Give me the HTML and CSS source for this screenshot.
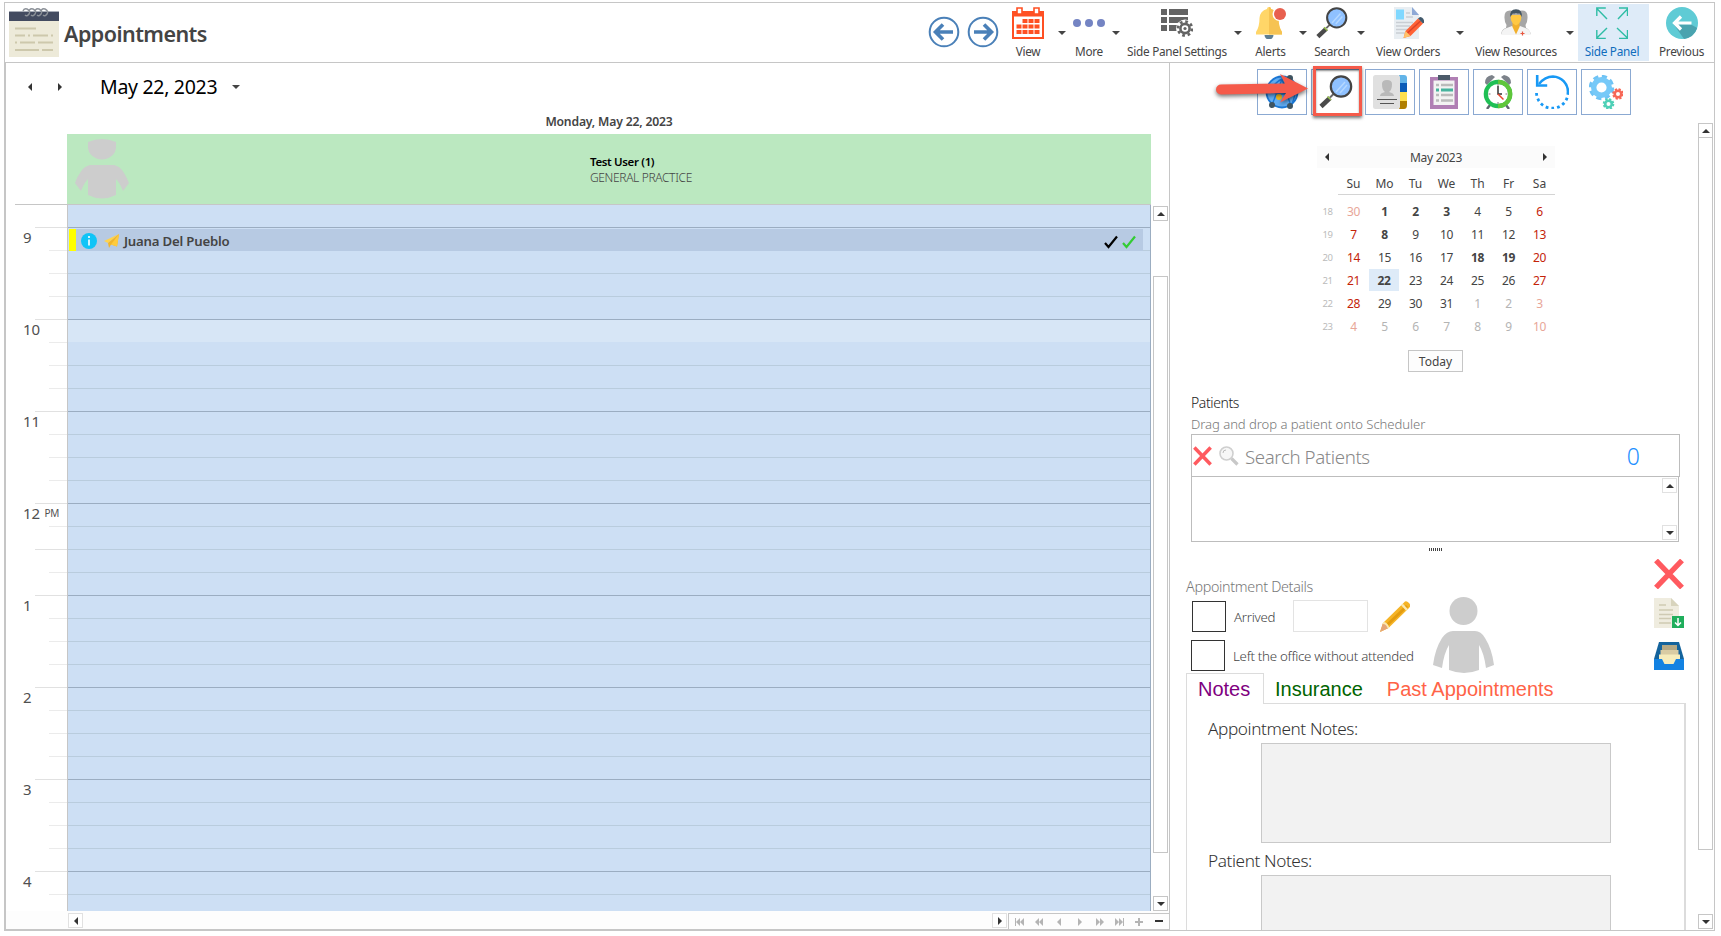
FILE: index.html
```html
<!DOCTYPE html>
<html lang="en">
<head>
  <meta charset="UTF-8"/>
  <meta name="viewport" content="width=device-width, initial-scale=1"/>
  <title>Appointments</title>
  <link rel="stylesheet" href="styles.css">
</head>
<body>
  <!-- shared icons -->
  <svg class="defs" width="0" height="0">
    <symbol id="magnifier" viewBox="0 0 34 34">
      <path d="M2 31.500L11 23" stroke="#4a4a4a" stroke-width="4.600"/>
      <path d="M11 22.500l4.500-4.500" stroke="#666" stroke-width="2"/>
      <path d="M8.500 21.500l3.500 3.500" stroke="#9bc94b" stroke-width="1.300"/>
      <circle cx="22" cy="11.500" r="10.200" fill="#8fc1ff" stroke="#444" stroke-width="2.200"/>
      <path d="M17 17l9-10M21 18l7-8" stroke="#b5d8ff" stroke-width="1.500"/>
    </symbol>
    <symbol id="cross" viewBox="0 0 28 29">
      <path d="M2 2L26 27M26 2L2 27" stroke="#ff5a5f" stroke-width="5.200"/>
    </symbol>
    <symbol id="person" viewBox="0 0 61 76">
      <circle cx="30.500" cy="14" r="14" fill="#cdcdcd"/>
      <path d="M20 34h22q6 0 10 7 7 11 9 27l-8 3q-2-15-7-23v25q-15 6-30 0V48q-5 8-7 23l-9-3q2-16 9-27 5-7 11-7z" fill="#cdcdcd"/>
    </symbol>
  </svg>

  <div class="window">
    <header class="topbar">
      <svg class="logo" viewBox="0 0 50 49">
        <path d="M0 12h50v37H0z" fill="#edead9"/>
        <path d="M0 4h50v9H0z" fill="#434b60"/>
        <path d="M0 3.500h50" stroke="#a9aeb8"/>
        <g fill="none" stroke="#8d9299" stroke-width="1.400">
          <path d="M14 3q1-3 4-2 4 2 2 5-2 3-4 1"/>
          <path d="M20 3q1-3 4-2 4 2 2 5-2 3-4 1"/>
          <path d="M26 3q1-3 4-2 4 2 2 5-2 3-4 1"/>
          <path d="M32 3q1-3 4-2 4 2 2 5-2 3-4 1"/>
        </g>
        <g stroke="#cdc8ac" stroke-width="1.800">
          <path d="M6 20.500h21M6 27.500h10M19 27.500h2M24 27.500h15M42 27.500h2M6 34.500h2M11 34.500h15M29 34.500h15M6 42h24M33 42h11"/>
        </g>
      </svg>
      <h1>Appointments</h1>

      <nav class="toolbar">
        <svg class="round" viewBox="0 0 32 32">
          <circle cx="16" cy="16" r="14.300" fill="#fff" stroke="#4a80b8" stroke-width="2"/>
          <path d="M25 16H8M15 8.500L7.500 16l7.500 7.500" fill="none" stroke="#4a80b8" stroke-width="3.600"/>
        </svg>
        <svg class="round" viewBox="0 0 32 32">
          <circle cx="16" cy="16" r="14.300" fill="#fff" stroke="#4a80b8" stroke-width="2"/>
          <path d="M7 16h17M17 8.500l7.500 7.500-7.500 7.500" fill="none" stroke="#4a80b8" stroke-width="3.600"/>
        </svg>

        <div class="tool view">
          <svg viewBox="0 0 32 32">
            <path d="M0 4h32v28H0z" fill="#ff5023"/>
            <path d="M2 9.500h28v20.500H2z" fill="#fff"/>
            <path d="M5 1h5v6H5zM22 1h5v6h-5z" fill="#fff" stroke="#ff5023" stroke-width="1.600"/>
            <path d="M10.500 12h5v4h-5zM16.500 12h5v4h-5zM22.500 12h5v4h-5zM4.500 17.500h5v4h-5zM10.500 17.500h5v4h-5zM16.500 17.500h5v4h-5zM22.500 17.500h5v4h-5zM4.500 23h5v4h-5zM10.500 23h5v4h-5zM16.500 23h5v4h-5zM22.500 23h5v4h-5z" fill="#ff5023"/>
          </svg>
          <span>View</span>
        </div>
        <i class="caret"></i>
        <div class="tool more">
          <svg viewBox="0 0 32 32">
            <g fill="#7484c3"><circle cx="4" cy="16" r="4"/><circle cx="16" cy="16" r="4"/><circle cx="28" cy="16" r="4"/></g>
          </svg>
          <span>More</span>
        </div>
        <i class="caret"></i>
        <div class="tool settings">
          <svg viewBox="0 0 32 32">
            <path d="M0 2h6v6H0zM8 2h19v6H8zM0 10h6v6H0zM8 10h19v6H8zM0 18h6v6H0zM8 18h10v6H8z" fill="#646464"/>
            <circle cx="24" cy="21.500" r="9" fill="#fff"/>
            <circle cx="24" cy="21.500" r="7" fill="none" stroke="#646464" stroke-width="2.600" stroke-dasharray="2.750 2.750"/>
            <circle cx="24" cy="21.500" r="4.600" fill="#fff" stroke="#646464" stroke-width="2.600"/>
            <circle cx="24" cy="21.500" r="1.600" fill="#646464"/>
          </svg>
          <span>Side Panel Settings</span>
        </div>
        <i class="caret"></i>
        <div class="tool alerts">
          <svg viewBox="0 0 32 32">
            <path d="M9.500 28a4.500 4.500 0 0 0 9 0z" fill="#5f7f92"/>
            <path d="M14 0q2 0 2 2 7 2 7.500 9 0 9 3.500 14v2.500H1V25q3.500-5 3.500-14Q5 4 12 2q0-2 2-2z" fill="#ffd668"/>
            <path d="M14 0q2 0 2 2 7 2 7.500 9 0 9 3.500 14v2.500H14z" fill="#f6c352"/>
            <circle cx="24.500" cy="7" r="7" fill="#fff"/>
            <circle cx="25" cy="7" r="6" fill="#e8604f"/>
          </svg>
          <span>Alerts</span>
        </div>
        <i class="caret"></i>
        <div class="tool search">
          <svg viewBox="0 0 34 34"><use href="#magnifier"/></svg>
          <span>Search</span>
        </div>
        <i class="caret"></i>
        <div class="tool orders">
          <svg viewBox="0 0 32 32">
            <path d="M2 0h18l7 7.500V32H2z" fill="#e9eef2"/>
            <path d="M20 0l7 8h-7z" fill="#8fa9d6"/>
            <path d="M4 2.500h8v10H4z" fill="#80d8ff"/>
            <path d="M14 6h4M14 10h7M4 15.500h17M4 19h14M4 22.500h12M4 26h9" stroke="#c9ced4" stroke-width="1.400"/>
            <path d="M11.500 31l2-7L26 11.500l5 5L18.500 29z" fill="#ff6236"/>
            <path d="M15.500 26L28.500 14" stroke="#d9442a" stroke-width="1.500"/>
            <path d="M11.500 31l2-7 5 5z" fill="#ffc36b"/>
            <path d="M26 11.500l2-1.500q3 0 4.500 4.500l-1.500 2z" fill="#41596b"/>
          </svg>
          <span>View Orders</span>
        </div>
        <i class="caret wide"></i>
        <div class="tool resources">
          <svg viewBox="0 0 32 32">
            <path d="M4.500 11Q4 3.500 10 3.500q4 0 6 4 2-4 6-4 6 0 5.500 7.500 0 4-2 7l.5 3q3 1 5 6H1q1-5 5-6l.5-3q-2-3-2-7z" fill="#a6a6a6"/>
            <path d="M1 28q.5-5 4.500-6.500L12 19l4 3 4-3 6.500 2.500Q30.500 23 31 28z" fill="#f4f4f4"/>
            <path d="M12.500 16h7v4L16 27.500 12.500 20z" fill="#f2b02c"/>
            <path d="M10.800 8h10.400v3.500q-.5 5-5.200 7-4.700-2-5.200-7z" fill="#ffc843"/>
            <path d="M10.300 10q-1-7.500 5.700-7.800 6.700.3 5.700 7.800l-2-3.500h-7z" fill="#435563"/>
            <path d="M22.500 24.500v4M20.500 26.500h4" stroke="#e8573f" stroke-width="1.200"/>
          </svg>
          <span>View Resources</span>
        </div>
        <i class="caret last"></i>
        <div class="tool panel-toggle active">
          <svg viewBox="0 0 32 32">
            <path d="M11 12L0.800 1.500M0.800 9V1h9M22 12L32 1.500M23 1h8.500v8M11 21L0.800 31M0.800 23v8.500h9M21 21l10.500 10M23 31.500h8.500V23" fill="none" stroke="#2fbda5" stroke-width="1.400"/>
          </svg>
          <span>Side Panel</span>
        </div>
        <div class="tool previous">
          <svg viewBox="0 0 32 32">
            <circle cx="16" cy="16" r="16" fill="#5fcbd5"/>
            <path d="M25 17.500L31.200 21A16 16 0 0 1 18 31.900L7.500 17z" fill="#4aa3af"/>
            <path d="M25.500 16H9M15 9.500L8.500 16l6.500 6.500" fill="none" stroke="#fff" stroke-width="3.200"/>
          </svg>
          <span>Previous</span>
        </div>
      </nav>
    </header>

    <div class="main">
      <!-- SCHEDULER -->
      <section class="scheduler">
        <div class="date-nav">
          <i class="tri left"></i>
          <i class="tri right"></i>
          <span class="current-date">May 22, 2023</span>
          <i class="caret"></i>
        </div>
        <div class="day-title">Monday, May 22, 2023</div>
        <div class="resource">
          <svg class="avatar" viewBox="0 0 54 60">
            <path d="M13 3q14-6 28 0v5a14 12.500 0 0 1-28 0z" fill="#cdcdcd"/>
            <path d="M15 26h24q6 1 10 8 3 5 5 10l-6 8q-3-8-7-12v16q-14 7-28 0V40q-4 4-7 12l-6-8q2-6 5-10 4-7 10-8z" fill="#cdcdcd"/>
          </svg>
          <div class="resource-text">
            <b>Test User (1)</b>
            <span>GENERAL PRACTICE</span>
          </div>
        </div>

        <div class="day">
          <div class="hours">
            <div class="hour partial"><div class="ruler"></div><div class="slots"></div></div>
            <div class="hour">
              <div class="ruler">9</div>
              <div class="slots">
                <div class="appt">
                  <svg class="info" viewBox="0 0 16 16"><circle cx="8" cy="8" r="8" fill="#10c4f7"/><path d="M8 3v2M8 6.500v6" stroke="#fff" stroke-width="1.600"/></svg>
                  <svg class="plane" viewBox="0 0 15 14"><path d="M15 0L0 7l4 2z" fill="#ffd34d"/><path d="M15 0L4 9l1 5 2-3.500 6 2z" fill="#f2b52a"/><path d="M15 0L7 10.500l6 2z" fill="#ffcb3c"/></svg>
                  <span>Juana Del Pueblo</span>
                  <svg class="check" viewBox="0 0 14 14"><path d="M1 8l3.500 4L13 1.500" fill="none" stroke="#000" stroke-width="2.200"/></svg>
                  <svg class="check" viewBox="0 0 14 14"><path d="M1 8l3.500 4L13 1.500" fill="none" stroke="#33cc33" stroke-width="2.200"/></svg>
                </div>
              </div>
            </div>
            <div class="hour"><div class="ruler">10</div><div class="slots now"></div></div>
            <div class="hour"><div class="ruler">11</div><div class="slots"></div></div>
            <div class="hour"><div class="ruler noon">12 <small>PM</small></div><div class="slots"></div></div>
            <div class="hour"><div class="ruler">1</div><div class="slots"></div></div>
            <div class="hour"><div class="ruler">2</div><div class="slots"></div></div>
            <div class="hour"><div class="ruler">3</div><div class="slots"></div></div>
            <div class="hour"><div class="ruler">4</div><div class="slots"></div></div>
          </div>
          <div class="vscroll">
            <div class="sbtn"><i class="tri up"></i></div>
            <div class="thumb"></div>
            <div class="sbtn"><i class="tri down"></i></div>
          </div>
        </div>

        <div class="hscroll">
          <div class="sbtn light"><i class="tri left"></i></div>
          <div class="sbtn light end"><i class="tri right"></i></div>
          <div class="pager">
            <svg viewBox="0 0 160 14">
              <g fill="#b4b4b4">
                <path d="M6 3h1v8H6zM11 3v8L7 7zM15 3v8l-4-4z"/>
                <path d="M30 3v8l-4-4zM34 3v8l-4-4z"/>
                <path d="M52 3v8l-4-4z"/>
                <path d="M69 3v8l4-4z"/>
                <path d="M87 3v8l4-4zM91 3v8l4-4z"/>
                <path d="M106 3v8l4-4zM110 3v8l4-4zM114 3h1v8h-1z"/>
                <path d="M126 6h8v2h-8zM129 3h2v8h-2z"/>
              </g>
              <path d="M146 5h8v2h-8z" fill="#333"/>
            </svg>
          </div>
        </div>
      </section>

      <!-- SIDE PANEL -->
      <aside class="side">
        <div class="quick">
          <div class="qbtn">
            <svg viewBox="0 0 34 34">
              <circle cx="17" cy="17" r="15.500" fill="#63aef4" stroke="#1b78d6" stroke-width="1.800"/>
              <path d="M7 30L17 4l9 27M3 14q14 10 28 0M17 4q-8 4-14 14M26 3q8 12 0 28" fill="none" stroke="#1b78d6" stroke-width="1.400"/>
              <circle cx="25" cy="3" r="3" fill="#3f5562"/><circle cx="7" cy="30" r="3" fill="#3f5562"/><circle cx="25" cy="31" r="3" fill="#3f5562"/>
              <circle cx="14" cy="22" r="3" fill="#f2b718"/>
            </svg>
            <svg class="callout-arrow" viewBox="0 0 94 34">
              <path d="M6 11.500l64-1L65 1l28 14.500-28 14 6-9.500-65 1.500a5 5 0 0 1 0-10z" fill="#f55a4a"/>
            </svg>
          </div>
          <div class="qbtn marked"><svg viewBox="0 0 34 34"><use href="#magnifier"/></svg></div>
          <div class="qbtn">
            <svg viewBox="0 0 34 34">
              <path d="M26 0h5q3 0 3 3v5h-8z" fill="#62b4e8"/><path d="M26 8h8v9h-8z" fill="#0a5cb8"/><path d="M26 17h8v9h-8z" fill="#ffe04f"/><path d="M26 26h8v4q0 4-3 4h-5z" fill="#b07f00"/>
              <rect width="27" height="34" rx="2.500" fill="#e0e0e0"/>
              <path d="M9 9q0-4 5-4t5 4q0 6-3 8 5 1 5 4H7q0-3 5-4-3-2-3-8z" fill="#b9b9b9"/>
              <path d="M4 24.500h20M7 28.500h14" stroke="#555" stroke-width="1.200"/>
            </svg>
          </div>
          <div class="qbtn">
            <svg viewBox="0 0 34 34">
              <path d="M3 2h28v32H3z" fill="#b07fb4"/><path d="M6.500 5.500h21V30h-21z" fill="#f3f3f3"/><path d="M11 0h12v5H11z" fill="#4b5a69"/>
              <path d="M9 10h3M9 20h3M9 25.500h3M14 10h12M14 20h12M14 25.500h12" stroke="#bbb" stroke-width="2.600"/>
              <path d="M9 15h3M14 15h12" stroke="#46b39d" stroke-width="2.800"/>
            </svg>
          </div>
          <div class="qbtn">
            <svg viewBox="0 0 34 34">
              <path d="M4 8q0-7 7-8l3 2-8 8zM30 8q0-7-7-8l-3 2 8 8z" fill="#7c828a"/>
              <path d="M9 30l-3 4M25 30l3 4" stroke="#60666e" stroke-width="2.400"/>
              <circle cx="17" cy="19" r="12.200" fill="#fff" stroke="#1fbf55" stroke-width="4.200"/>
              <path d="M17 6.800a12.200 12.200 0 0 1 0 24.400" fill="none" stroke="#5fc63a" stroke-width="4.200"/>
              <path d="M17 11v8h4" fill="none" stroke="#333" stroke-width="1.500"/><path d="M17 19l5.500 5.500" stroke="#e8452c" stroke-width="1.500"/>
              <path d="M17 9v2M17 27v2M7.500 19h2M24.500 19h2" stroke="#777"/>
            </svg>
          </div>
          <div class="qbtn">
            <svg viewBox="0 0 34 34">
              <path d="M4 9Q10 1.500 18 1.500A15.500 15.500 0 0 1 33 17" fill="none" stroke="#1899f5" stroke-width="2.600"/>
              <path d="M2.200 0v10.500h10" fill="none" stroke="#1899f5" stroke-width="2.600"/>
              <path d="M33 17a15.500 15.500 0 1 1-31.500 1" fill="none" stroke="#1899f5" stroke-width="2.800" stroke-dasharray="2.800 3"/>
            </svg>
          </div>
          <div class="qbtn">
            <svg viewBox="0 0 34 34">
              <circle cx="12.500" cy="12.500" r="11" fill="none" stroke="#6fc3f5" stroke-width="3.400" stroke-dasharray="5.100 3.540"/>
              <circle cx="12.500" cy="12.500" r="7.800" fill="#fff" stroke="#76c9f8" stroke-width="5.400"/>
              <circle cx="29" cy="19" r="4.800" fill="none" stroke="#f76757" stroke-width="2" stroke-dasharray="2.200 1.570"/>
              <circle cx="29" cy="19" r="3.300" fill="#fff" stroke="#f76757" stroke-width="2.600"/>
              <circle cx="19.500" cy="29" r="4.800" fill="none" stroke="#4fd0b7" stroke-width="2" stroke-dasharray="2.200 1.570"/>
              <circle cx="19.500" cy="29" r="3.300" fill="#fff" stroke="#4fd0b7" stroke-width="2.600"/>
            </svg>
          </div>
        </div>

        <div class="side-body">
          <div class="side-content">
            <div class="calendar">
              <div class="cal-head"><i class="tri left"></i><span>May 2023</span><i class="tri right"></i></div>
              <div class="cal-days"><span>Su</span><span>Mo</span><span>Tu</span><span>We</span><span>Th</span><span>Fr</span><span>Sa</span></div>
              <div class="cal-grid">
                <i>18</i><span class="red off">30</span><b>1</b><b>2</b><b>3</b><span>4</span><span>5</span><span class="red">6</span>
                <i>19</i><span class="red">7</span><b>8</b><span>9</span><span>10</span><span>11</span><span>12</span><span class="red">13</span>
                <i>20</i><span class="red">14</span><span>15</span><span>16</span><span>17</span><b>18</b><b>19</b><span class="red">20</span>
                <i>21</i><span class="red">21</span><b class="selected">22</b><span>23</span><span>24</span><span>25</span><span>26</span><span class="red">27</span>
                <i>22</i><span class="red">28</span><span>29</span><span>30</span><span>31</span><span class="off">1</span><span class="off">2</span><span class="red off">3</span>
                <i>23</i><span class="red off">4</span><span class="off">5</span><span class="off">6</span><span class="off">7</span><span class="off">8</span><span class="off">9</span><span class="red off">10</span>
              </div>
              <button class="today">Today</button>
            </div>

            <div class="patients">
              <h2>Patients</h2>
              <p>Drag and drop a patient onto Scheduler</p>
              <div class="patient-search">
                <svg class="clear"><use href="#cross"/></svg>
                <svg class="glass" viewBox="0 0 20 20"><circle cx="7.500" cy="7.500" r="6.500" fill="#f6f6f6" stroke="#cfcfcf" stroke-width="1.600"/><path d="M4 7q0-3 3-3" fill="none" stroke="#bbb"/><path d="M12.500 12.500l6 6" stroke="#c8c8c8" stroke-width="3.200"/></svg>
                <span class="placeholder">Search Patients</span>
                <span class="count">0</span>
              </div>
              <div class="patient-list">
                <div class="sbtn light"><i class="tri up"></i></div>
                <div class="sbtn light"><i class="tri down"></i></div>
              </div>
              <div class="grip"></div>
            </div>

            <div class="details">
              <div class="fields">
                <h3>Appointment Details</h3>
                <div class="field"><i class="box"></i><span>Arrived</span><i class="time"></i>
                  <svg class="pencil" viewBox="0 0 30 31">
                    <path d="M0 31l3-9L24 1.500q2-2.500 5 .5 2.500 3 0 5L8.500 27z" fill="#f5b427"/>
                    <path d="M6 25L27 5" stroke="#e39c10" stroke-width="3"/>
                    <path d="M0 31l3-9q3 0 3.500 2 2 .5 2 3z" fill="#e5a679"/>
                    <path d="M22 3.500l5 5.500" stroke="#fbe9b0" stroke-width="2.500"/>
                    <path d="M3 22q4 0 5.500 5" fill="none" stroke="#fbe9b0" stroke-width="1.800"/>
                  </svg>
                </div>
                <div class="field second"><i class="box"></i><span>Left the office without attended</span></div>
              </div>
              <svg class="photo" viewBox="0 0 61 76"><use href="#person"/></svg>
              <div class="actions">
                <svg viewBox="0 0 30 30"><path d="M2 1.500L28 28.500M28 1.500L2 28.500" stroke="#ff5a5f" stroke-width="5.400"/></svg>
                <svg viewBox="0 0 30 30">
                  <path d="M0 0h17l8 8v22H0z" fill="#efecdf"/><path d="M17 0l8 8h-8z" fill="#d8d4bd"/>
                  <path d="M5 7h7M5 12h14M5 16.500h14M5 20.500h12M5 25h12" stroke="#cfcab3" stroke-width="1.300"/>
                  <path d="M18 18h12v12H18z" fill="#1fae5c"/><path d="M24 20v7M21 24.500l3 3 3-3" fill="none" stroke="#fff" stroke-width="1.500"/>
                </svg>
                <svg viewBox="0 0 30 28">
                  <path d="M5 0h20l5 17H0z" fill="#14639c"/>
                  <path d="M8 3h15v5H8z" fill="#b5a883"/><path d="M6.500 8h18v5h-18z" fill="#d8cba3"/><path d="M5 12.500h21V19l-6 3H10l-5-3z" fill="#f6ecbc"/>
                  <path d="M0 17h8l2.500 5h9l2.500-5h8v11H0z" fill="#1382e2"/>
                </svg>
              </div>
            </div>

            <div class="tabs">
              <span class="tab notes">Notes</span>
              <span class="tab insurance">Insurance</span>
              <span class="tab past">Past Appointments</span>
            </div>
            <div class="tab-panel">
              <label>Appointment Notes:</label>
              <div class="area"></div>
              <label>Patient Notes:</label>
              <div class="area"></div>
            </div>
          </div>

          <div class="side-scroll">
            <div class="sbtn"><i class="tri up"></i></div>
            <div class="thumb"></div>
            <div class="sbtn"><i class="tri down"></i></div>
          </div>
        </div>
      </aside>
    </div>
  </div>
</body>
</html>
```
FILE: styles.css
```css
:root {
  --line: #c6c6c6;
  --line-soft: #e1e1e1;
  --text: #444;
  --cell: #cddff4;
  --cell-line: #b9ccdd;
  --hour-line: #9badc1;
}

/* RESET */
*, *::before, *::after { box-sizing:border-box; margin:0; padding:0 }
body {
  height:936px;
  overflow:hidden;
  background:#fff;
  color:var(--text);
  font-family:"Noto Sans","Open Sans",sans-serif;
  font-size:12px;
}
i { font-style:normal }
svg { display:block; flex:none }
.defs { position:absolute }

.window {
  width:1711px;
  height:929px;
  margin:2px 0 0 4px;
  border:1px solid var(--line);
  border-left:0;
  display:flex;
  flex-direction:column;
}

/* ARROWS */
.caret {
  display:flex;
  justify-content:center;
  width:18px;
  flex:none;
}
.caret::after {
  content:"";
  height:0;
  border:4px solid transparent;
  border-top-color:#444;
  border-bottom:0;
}
.tri { width:0; height:0; border:4px solid transparent; flex:none }
.tri.left { border-right-color:#333; border-left:0 }
.tri.right { border-left-color:#333; border-right:0 }
.tri.up { border-bottom-color:#333; border-top:0 }
.tri.down { border-top-color:#333; border-bottom:0 }

/* TOP BAR */
.topbar {
  height:60px;
  flex:none;
  display:flex;
  border-bottom:1px solid var(--line);
  border-left:1px solid var(--line);
}
.logo { width:50px; height:49px; margin:5px 0 0 4px }
h1 {
  font-size:21.5px;
  font-weight:600;
  letter-spacing:-.55px;
  line-height:30px;
  margin:16px 0 0 5px;
}
.toolbar { display:flex; margin-left:auto }
.round { width:32px; height:32px; margin:13px 7px 0 0 }
.round + .tool { margin-left:-3px }
.toolbar .caret { padding-top:28px }
.toolbar .caret.wide { width:28px }
.toolbar .caret.last { width:20px; padding-left:4px }
.tool {
  display:flex;
  flex-direction:column;
  align-items:center;
  padding-top:3px;
  height:57px;
  margin-top:1px;
  flex:none;
}
.tool svg { width:32px; height:32px }
.tool span {
  font-size:11.8px;
  letter-spacing:-.28px;
  line-height:16px;
  margin-top:4px;
  white-space:nowrap;
}
.view { width:50px }
.more { width:36px }
.settings { width:104px }
.alerts { width:47px }
.search { width:40px }
.orders { width:76px }
.resources { width:84px }
.panel-toggle { width:71px; padding-right:3px }
.previous { width:65px }
.active { background:#deebf8; color:#0f6cbd }

.main { display:flex; flex:1; min-height:0 }

/* SCHEDULER */
.scheduler {
  width:1166px;
  height:868px;
  flex:none;
  display:flex;
  flex-direction:column;
  border-left:2px solid var(--line);
  border-right:1px solid var(--line);
  border-bottom:2px solid var(--line);
}
.date-nav {
  height:48px;
  display:flex;
  align-items:center;
  padding-left:22px;
}
.date-nav .tri { margin-right:26px }
.current-date {
  color:#000;
  font-size:19.5px;
  letter-spacing:-.3px;
  line-height:24px;
  margin:0 10px 0 12px;
}
.day-title {
  height:23px;
  margin-left:61px;
  width:1084px;
  text-align:center;
  font-size:12.2px;
  font-weight:600;
  letter-spacing:-.18px;
  line-height:22px;
}
.resource {
  display:flex;
  margin-left:61px;
  width:1084px;
  height:70px;
  background:#bbe8c0;
}
.avatar { width:54px; height:60px; margin:5px 0 0 8px }
.resource-text {
  display:flex;
  flex-direction:column;
  margin:20px 0 0 461px;
  font-size:11.5px;
  line-height:16px;
  letter-spacing:-.35px;
}
.resource-text b { color:#000; font-weight:600 }
.resource-text span { font-size:12px; font-weight:300 }

.day { display:flex; height:707px; flex:none }
/* the top line starts a little right of the panel edge */
.hours {
  width:1145px;
  overflow:hidden;
  padding-top:1px;
  background:linear-gradient(var(--line),var(--line)) 9px 0 / 100% 1px no-repeat;
}
.hour { display:flex; height:92px }
.hour.partial { height:22px }
.ruler {
  width:62px;
  padding-left:17px;
  color:#505050;
  font-size:15px;
  letter-spacing:-.2px;
  line-height:20px;
  border-right:1px solid var(--line);
  background:
    linear-gradient(var(--line-soft),var(--line-soft)) 29px 0 / 32px 1px no-repeat,
    linear-gradient(#ebebeb,#ebebeb) 43px 23px / 18px 1px no-repeat,
    linear-gradient(#ebebeb,#ebebeb) 43px 46px / 18px 1px no-repeat,
    linear-gradient(#ebebeb,#ebebeb) 43px 69px / 18px 1px no-repeat;
}
.ruler small { font-size:10px; vertical-align:2px; margin-left:1px }
.ruler.noon {
  background:
    linear-gradient(var(--line-soft),var(--line-soft)) 29px 0 / 32px 1px no-repeat,
    linear-gradient(#ebebeb,#ebebeb) 43px 23px / 18px 1px no-repeat,
    linear-gradient(var(--line-soft),var(--line-soft)) 29px 46px / 32px 1px no-repeat,
    linear-gradient(#ebebeb,#ebebeb) 43px 69px / 18px 1px no-repeat;
}
.partial .ruler { background:none }
.slots {
  flex:1;
  border-right:1px solid var(--hour-line);
  background:
    linear-gradient(var(--hour-line),var(--hour-line)) 0 0 / 100% 1px no-repeat,
    repeating-linear-gradient(var(--cell-line) 0 1px, var(--cell) 1px 23px);
}
.slots.now {
  background:
    linear-gradient(var(--hour-line),var(--hour-line)) 0 0 / 100% 1px no-repeat,
    linear-gradient(#d7e6f6,#d7e6f6) 0 0 / 100% 23px no-repeat,
    linear-gradient(var(--cell),var(--cell)) 0 23px / 100% 1px no-repeat,
    repeating-linear-gradient(var(--cell-line) 0 1px, var(--cell) 1px 23px);
}
.partial .slots { background:var(--cell) }
.appt {
  display:flex;
  align-items:center;
  width:1074px;
  height:22px;
  margin:2px 0 0 1px;
  padding-right:7px;
  border-left:7px solid #ff0;
  background:#b7cae3;
}
.info { width:16px; height:16px; margin:2px 0 0 5px }
.plane { width:15px; height:14px; margin:2px 0 0 7px }
.appt span {
  flex:1;
  margin-left:5px;
  padding-top:2px;
  font-size:13.2px;
  font-weight:600;
  letter-spacing:-.2px;
  line-height:20px;
}
.check { width:14px; height:14px; margin:3px 0 0 4px }

/* SCROLLBARS */
.sbtn {
  width:15px;
  height:15px;
  flex:none;
  display:flex;
  align-items:center;
  justify-content:center;
  border:1px solid var(--line);
  background:#fff;
}
.sbtn.light { border-color:#e1e1e1 }
.thumb { border:1px solid var(--line); background:#fff }
.vscroll {
  width:18px;
  padding:2px 0 0 2px;
  display:flex;
  flex-direction:column;
}
.vscroll .thumb { width:15px; height:577px; margin:55px 0 43px }
.hscroll { display:flex; flex:1; padding-left:62px; background:#fdfdfd }
.hscroll .sbtn { margin-top:2px }
.hscroll .end { margin-left:auto; margin-right:1px }
.pager {
  width:161px;
  margin-top:2px;
  border:1px solid var(--line);
  border-right:0;
  border-bottom:0;
}
.pager svg { width:160px; height:14px; margin-top:1px }

/* SIDE PANEL */
.side { flex:1; min-width:0; display:flex; flex-direction:column }
.quick { display:flex; gap:4px; padding:6px 0 0 87px; height:60px; flex:none }
.qbtn {
  position:relative;
  width:50px;
  height:46px;
  display:flex;
  align-items:center;
  justify-content:center;
  border:1.5px solid #8ba9d2;
}
.qbtn svg { width:34px; height:34px }
/* red highlight around the search shortcut */
.qbtn.marked::after {
  content:"";
  position:absolute;
  left:1px;
  top:-4px;
  width:49px;
  height:50px;
  border:3px solid #f55a4a;
  box-shadow:0 2px 3px rgba(0,0,0,.55), inset 0 2px 2px rgba(0,0,0,.45);
}
.qbtn .callout-arrow {
  position:absolute;
  left:-43px;
  top:3px;
  width:94px;
  height:34px;
  z-index:1;
  filter:drop-shadow(0 2px 2px rgba(0,0,0,.55));
}
.side-body { display:flex; flex:1; min-height:0; overflow:hidden }
.side-content { width:528px; flex:none }
.side-scroll {
  width:16px;
  height:806px;
  display:flex;
  flex-direction:column;
}
.side-scroll .thumb { width:15px; height:713px; margin-top:-1px }
.side-scroll .sbtn:last-child { margin-top:auto }

/* CALENDAR */
.calendar { width:238px; margin:23px 0 0 147px; font-size:12px; line-height:22px }
.cal-head {
  display:flex;
  align-items:center;
  justify-content:space-between;
  height:22px;
  padding:0 8px;
  background:#fbfbfb;
}
.cal-head span { letter-spacing:-.3px; padding-top:2px }
.cal-days {
  display:grid;
  grid-template-columns:repeat(7, 31px);
  text-align:center;
  height:22px;
  margin:5px 0 0 21px;
  border-bottom:1px solid #d4d4d4;
}
.cal-grid {
  display:grid;
  grid-template-columns:21px repeat(7, 31px);
  grid-auto-rows:23px;
  text-align:center;
  line-height:24px;
  margin-top:5px;
}
.cal-grid > * { letter-spacing:-.4px }
.cal-grid i { font-size:9.5px; color:#bbb }
.cal-grid b { font-weight:700 }
.cal-grid .off { color:#b4b4b4 }
.cal-grid .red { color:#c42309 }
.cal-grid .red.off { color:#e8a698 }
.cal-grid .selected { background:#deebf8; height:22px; width:30px }
.today {
  display:block;
  width:55px;
  height:22px;
  margin:12px 0 0 91px;
  padding-top:1px;
  border:1px solid var(--line);
  background:#fdfdfd;
  color:var(--text);
  font:12px/20px "Noto Sans","Open Sans",sans-serif;
}

/* PATIENTS */
.patients { margin:22px 0 0 21px; width:489px }
.patients h2 { font-size:14px; font-weight:300; line-height:18px; letter-spacing:-.4px; color:#222 }
.patients p { font-size:13.1px; font-weight:300; line-height:20px; letter-spacing:-.06px; color:#777; margin-top:2px }
.patient-search {
  display:flex;
  align-items:center;
  height:43px;
  border:1px solid #bdbdbd;
}
.clear { width:19px; height:20px; margin-left:1px }
.glass { width:20px; height:20px; margin-left:7px }
.placeholder {
  flex:1;
  margin-left:6px;
  padding-top:1px;
  font-size:18.7px;
  font-weight:300;
  letter-spacing:-.4px;
  color:#888;
}
.count { font-size:23px; font-weight:300; color:#1e90ff; margin-right:39px }
.patient-list {
  display:flex;
  flex-direction:column;
  justify-content:space-between;
  align-items:flex-end;
  width:488px;
  height:66px;
  margin-top:-1px;
  padding:1px;
  border:1px solid #bdbdbd;
}
.grip {
  width:13px;
  height:3px;
  margin:6px 0 0 238px;
  background:repeating-linear-gradient(90deg, #444 0 1px, #fff 1px 2px);
}

/* DETAILS */
.details { display:flex; height:122px; padding-left:16px; font-weight:300 }
.fields { width:247px; padding-top:24px; flex:none }
.details h3 { font-size:14.3px; font-weight:300; line-height:24px; height:22px; letter-spacing:-.3px; color:#777 }
.field { display:flex; align-items:center; margin:3px 0 0 6px; height:32px; font-size:13.3px; letter-spacing:-.28px; white-space:nowrap }
.field.second { margin:7px 0 0 5px }
.field span { padding-top:2px }
.box { width:34px; height:31px; border:1px solid #333; margin-right:8px; flex:none }
.time { width:75px; height:32px; border:1px solid #e3e3e3; margin-left:18px; flex:none }
.pencil { width:30px; height:31px; margin-left:12px }
.photo { width:61px; height:76px; margin-top:46px }
.actions {
  display:flex;
  flex-direction:column;
  margin:8px 0 0 160px;
}
.actions svg { width:30px; height:30px; margin-bottom:9px }
.actions svg:last-child { height:28px; margin-top:5px }

/* TABS */
.tabs {
  display:flex;
  height:30px;
  margin-left:16px;
  font:20px/33px "Liberation Sans",Arial,sans-serif;
}
.tab.notes {
  width:78px;
  height:31px;
  padding-left:11px;
  border:1px solid #dcdcdc;
  border-bottom:0;
  background:#fff;
  color:purple;
  line-height:31px;
  z-index:1;
}
.tab.insurance { color:#006400; margin-left:11px }
.tab.past { color:tomato; margin-left:24px }
.tab-panel {
  width:500px;
  height:240px;
  margin-left:16px;
  padding:13px 0 0 21px;
  border:1px solid #dcdcdc;
  border-right-width:2px;
}
.tab-panel label {
  display:block;
  font-size:17.2px;
  font-weight:300;
  line-height:24px;
  letter-spacing:-.4px;
  color:#333;
}
.area {
  width:350px;
  height:100px;
  margin:2px 0 6px 53px;
  border:1px solid #c9c9c9;
  background:#f2f2f2;
}
```
